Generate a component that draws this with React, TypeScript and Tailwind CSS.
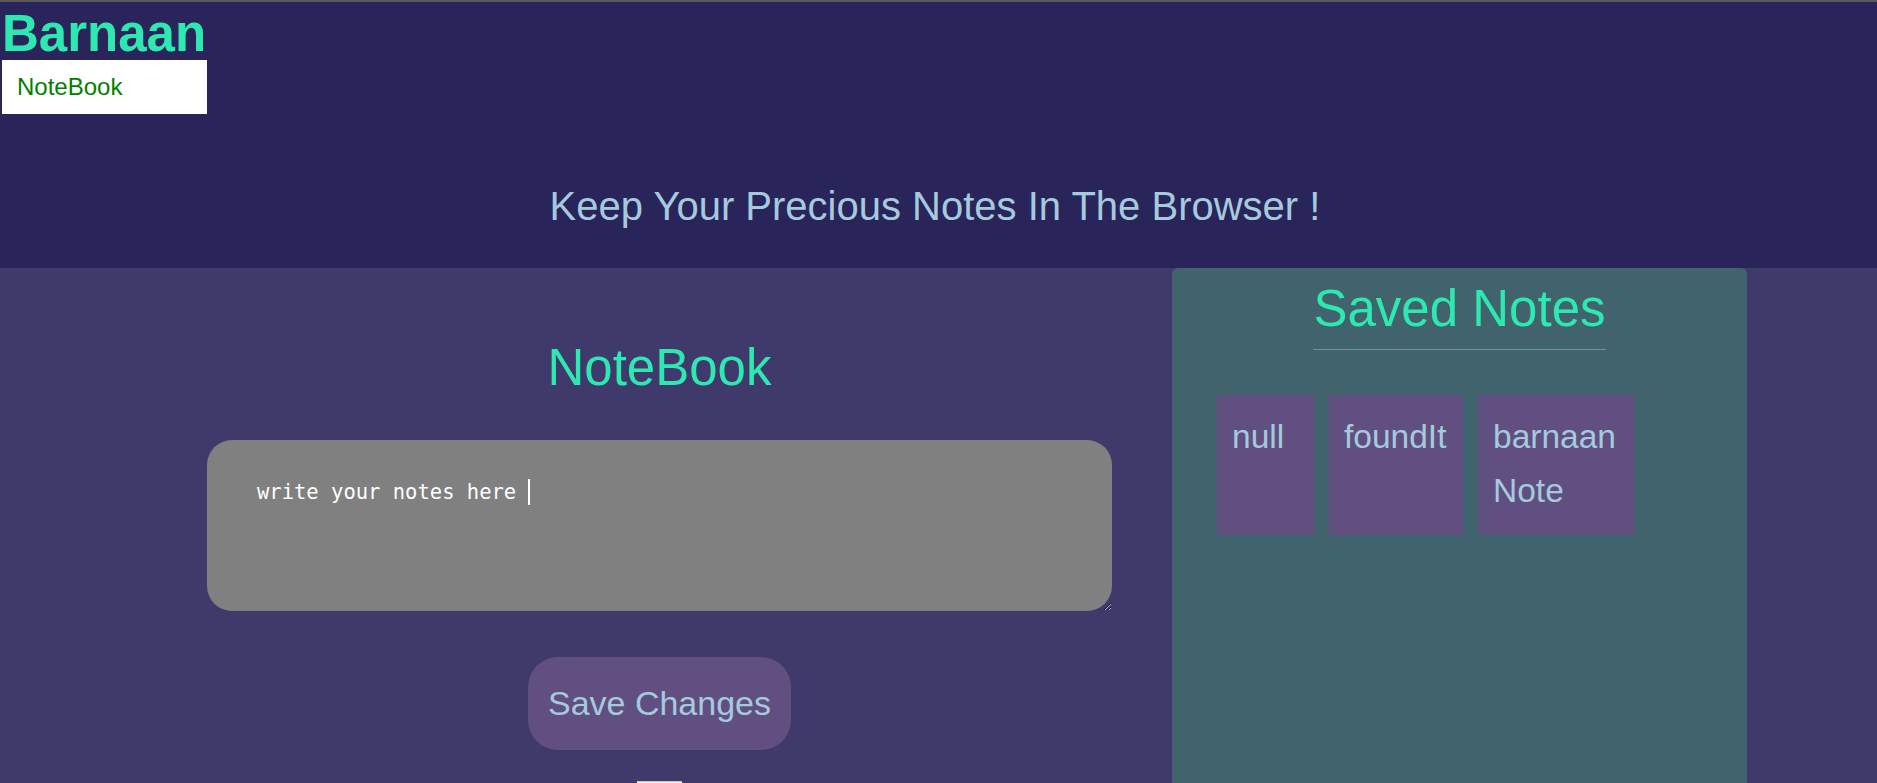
import React from 'react';

const NOTES: { text: string; w: string }[] = [
  { text: 'null', w: 'w-[97px]' },
  { text: 'foundIt', w: 'w-[134px]' },
  { text: 'barnaan Note', w: 'w-[156px]' },
];

export default function App() {
  return (
    <div className="h-[783px] overflow-hidden bg-[#3f3a6b] font-['Liberation_Sans',Arial,sans-serif]">
      <div className="h-[2px] bg-[#5a5a5a]" />

      {/* Header */}
      <header className="bg-[#29255a]">
        <div className="h-[58px] pt-[3px] pl-[2px] text-[51px] font-bold leading-[58px] text-[#2de9b1]">Barnaan</div>
        <nav className="ml-[2px] flex h-[54px] w-[205px] items-center bg-white pl-[15px] text-[24px] text-[#008000]">
          NoteBook
        </nav>
        <p className="pt-[69px] pr-[7px] pb-[39px] text-center text-[40px] leading-[46px] text-[#a5cadd]">
          Keep Your Precious Notes In The Browser !
        </p>
      </header>

      <main className="flex">
        {/* Editor */}
        <section className="flex w-[1172px] flex-col items-center pl-[147px] pt-[70px]">
          <h2 className="text-[51px] leading-[59px] text-[#2de9b1]">NoteBook</h2>
          <div className="relative mt-[43px]">
            <textarea
              defaultValue="write your notes here "
              spellCheck={false}
              className="block h-[171px] w-[905px] rounded-[25px] border-0 bg-[#808080] pl-[50px] pt-[39px] font-['DejaVu_Sans_Mono',monospace] text-[20.5px] leading-[26px] text-white outline-none"
            />
            <span className="absolute left-[321px] top-[39px] h-[26px] w-[2px] bg-white" />
          </div>
          <button className="mt-[46px] h-[93px] w-[263px] rounded-[30px] bg-[#604f80] text-[34px] text-[#a5cadd]">
            Save Changes
          </button>
          <div className="mt-[31px] h-[30px] w-[45px] border-t border-[#c8c8c8] bg-[#efefef]" />
        </section>

        {/* Saved notes */}
        <aside className="min-h-[515px] w-[575px] rounded-t-md bg-[#41636e] px-[45px] pt-[11px]">
          <div className="text-center">
            <h2 className="inline-block border-b border-[#7b8e96] pb-[11px] text-[51px] leading-[59px] text-[#2de9b1]">
              Saved Notes
            </h2>
          </div>
          <div className="mt-[45px] flex gap-[15px]">
            {NOTES.map((n) => (
              <div
                key={n.text}
                className={`${n.w} h-[140px] bg-[#604f80] px-[15px] pt-[15px] text-[33.5px] leading-[54px] text-[#a5cadd]`}
              >
                {n.text}
              </div>
            ))}
          </div>
        </aside>
      </main>
    </div>
  );
}
